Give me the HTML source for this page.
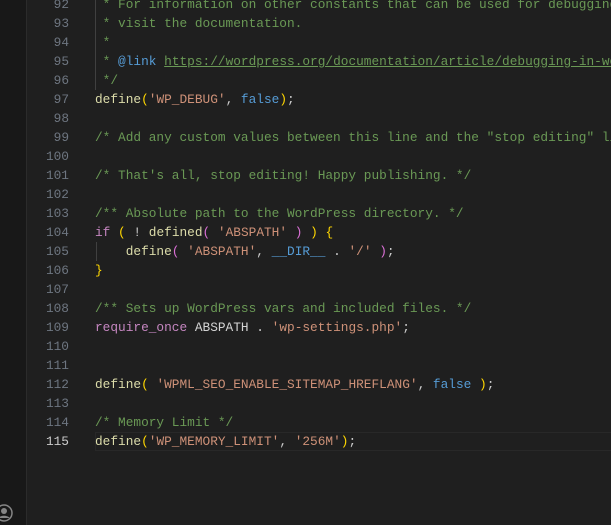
<!DOCTYPE html>
<html><head><meta charset="utf-8"><style>
html,body{margin:0;padding:0;width:611px;height:525px;overflow:hidden;background:#1f1f1f}
#act{position:absolute;left:0;top:0;width:26px;height:525px;background:#181818;border-right:1px solid #2b2b2b;overflow:hidden}
#ed{position:absolute;left:27px;top:0;width:584px;height:525px;overflow:hidden;font-family:"Liberation Mono",monospace;font-size:12.8px;color:#cccccc}
.l{position:absolute;left:0;height:19px;line-height:19px;white-space:pre;width:584px}
.n{position:absolute;left:0;width:42px;text-align:right;color:#6e7681}
.c{position:absolute;left:68px}
.cm{color:#6a9955}.f{color:#dcdcaa}.s{color:#ce9178}.k{color:#569cd6}.y{color:#ffd700}.p{color:#da70d6}.kw{color:#c586c0}.v{color:#d4d4d4}
.u{text-decoration:underline}
#cur{position:absolute;left:95px;top:432px;width:520px;height:17px;border:1px solid #282828}
.g{position:absolute;width:1px;background:#404040}
</style></head><body>
<div id="act"><svg style="position:absolute;left:-6px;top:503px" width="20" height="20" viewBox="0 0 20 20"><circle cx="10" cy="10" r="8" fill="none" stroke="#868686" stroke-width="1.5"/><circle cx="10" cy="8" r="3" fill="#868686"/><path d="M4.5 15c1.5-3 9.5-3 11 0" fill="#868686"/></svg></div>
<div class="g" style="left:95px;top:0;height:90px"></div>
<div class="g" style="left:96px;top:242px;height:19px"></div>
<div id="cur"></div>
<div id="ed">
<div class="l" style="top:-5px"><span class="n">92</span><span class="c cm"> * For information on other constants that can be used for debugging,</span></div>
<div class="l" style="top:14px"><span class="n">93</span><span class="c cm"> * visit the documentation.</span></div>
<div class="l" style="top:33px"><span class="n">94</span><span class="c cm"> *</span></div>
<div class="l" style="top:52px"><span class="n">95</span><span class="c cm"> * <span class="k">@link</span> <span class="u">https://wordpress.org/documentation/article/debugging-in-wordpress/</span></span></div>
<div class="l" style="top:71px"><span class="n">96</span><span class="c cm"> */</span></div>
<div class="l" style="top:90px"><span class="n">97</span><span class="c"><span class="f">define</span><span class="y">(</span><span class="s">'WP_DEBUG'</span>, <span class="k">false</span><span class="y">)</span>;</span></div>
<div class="l" style="top:109px"><span class="n">98</span></div>
<div class="l" style="top:128px"><span class="n">99</span><span class="c cm">/* Add any custom values between this line and the "stop editing" line. */</span></div>
<div class="l" style="top:147px"><span class="n">100</span></div>
<div class="l" style="top:166px"><span class="n">101</span><span class="c cm">/* That's all, stop editing! Happy publishing. */</span></div>
<div class="l" style="top:185px"><span class="n">102</span></div>
<div class="l" style="top:204px"><span class="n">103</span><span class="c cm">/** Absolute path to the WordPress directory. */</span></div>
<div class="l" style="top:223px"><span class="n">104</span><span class="c"><span class="kw">if</span> <span class="y">(</span> ! <span class="f">defined</span><span class="p">(</span> <span class="s">'ABSPATH'</span> <span class="p">)</span> <span class="y">)</span> <span class="y">{</span></span></div>
<div class="l" style="top:242px"><span class="n">105</span><span class="c">    <span class="f">define</span><span class="p">(</span> <span class="s">'ABSPATH'</span>, <span class="k">__DIR__</span> . <span class="s">'/'</span> <span class="p">)</span>;</span></div>
<div class="l" style="top:261px"><span class="n">106</span><span class="c"><span class="y">}</span></span></div>
<div class="l" style="top:280px"><span class="n">107</span></div>
<div class="l" style="top:299px"><span class="n">108</span><span class="c cm">/** Sets up WordPress vars and included files. */</span></div>
<div class="l" style="top:318px"><span class="n">109</span><span class="c"><span class="kw">require_once</span> <span class="v">ABSPATH</span> . <span class="s">'wp-settings.php'</span>;</span></div>
<div class="l" style="top:337px"><span class="n">110</span></div>
<div class="l" style="top:356px"><span class="n">111</span></div>
<div class="l" style="top:375px"><span class="n">112</span><span class="c"><span class="f">define</span><span class="y">(</span> <span class="s">'WPML_SEO_ENABLE_SITEMAP_HREFLANG'</span>, <span class="k">false</span> <span class="y">)</span>;</span></div>
<div class="l" style="top:394px"><span class="n">113</span></div>
<div class="l" style="top:413px"><span class="n">114</span><span class="c cm">/* Memory Limit */</span></div>
<div class="l" style="top:432px"><span class="n" style="color:#cccccc">115</span><span class="c"><span class="f">define</span><span class="y">(</span><span class="s">'WP_MEMORY_LIMIT'</span>, <span class="s">'256M'</span><span class="y">)</span>;</span></div>
</div>
</body></html>
